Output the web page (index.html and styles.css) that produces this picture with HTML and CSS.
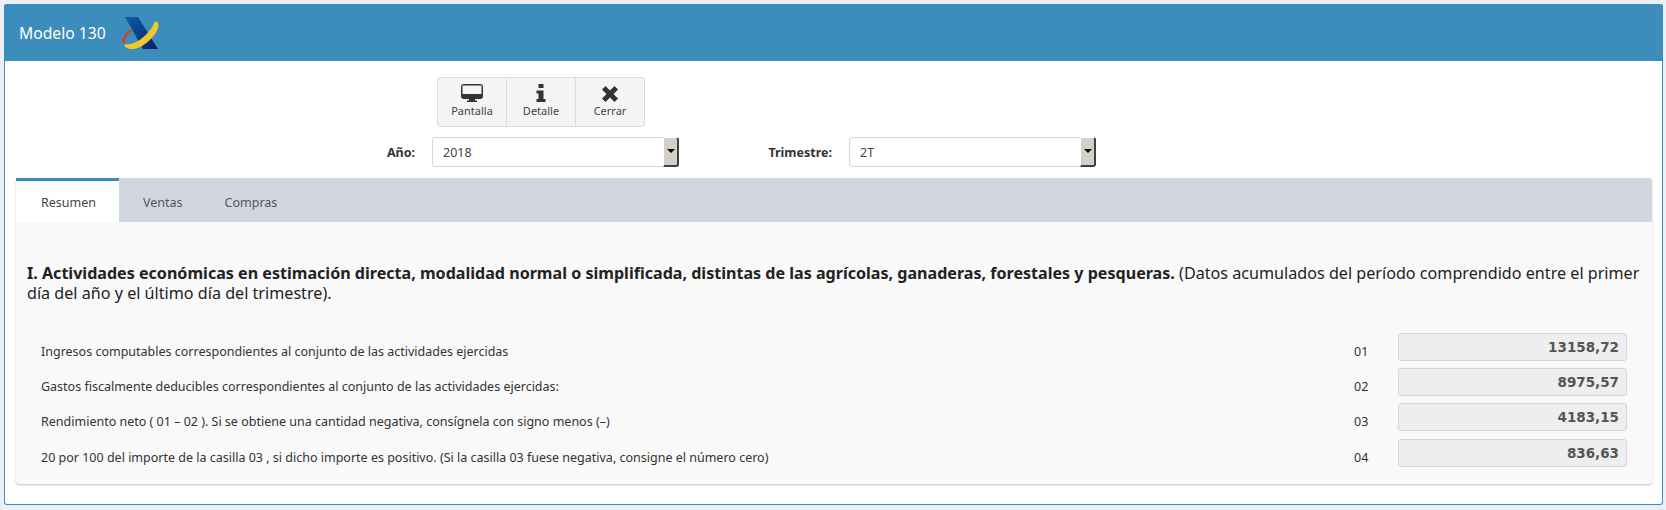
FILE: index.html
```html
<!DOCTYPE html>
<html lang="es">
<head>
<meta charset="utf-8">
<title>Modelo 130</title>
<link rel="stylesheet" href="styles.css">
</head>
<body>
<div class="panel">
  <header class="panel-head">
    <span class="panel-title">Modelo 130</span>
    <svg class="logo" width="38" height="34" viewBox="0 0 38 34">
      <defs>
        <linearGradient id="xg" x1="0" y1="0" x2="1" y2="1">
          <stop offset="0" stop-color="#0a5ea8"/>
          <stop offset="1" stop-color="#0a1f66"/>
        </linearGradient>
      </defs>
      <path d="M4 1H17L37 33H22Z" fill="url(#xg)"/>
      <path d="M9.500 13.500C5 16 1.500 21 1 26L3.500 28C4 23 6.500 18 10.500 15.500Z" fill="#d8401f"/>
      <path d="M34 5.500C31 13 24 21 17 25C13 27.500 8 28.500 4.500 28L3.500 30C5 32.500 9 33.500 13 33C21 32 34 22 37.500 11L37 6Z" fill="#f2c72e"/>
    </svg>
  </header>
  <div class="panel-body">
    <div class="toolbar">
      <button class="tool" type="button">
        <svg width="22" height="18" viewBox="0 0 22 18"><path d="M3 0H19A3 3 0 0 1 22 3V12A3 3 0 0 1 19 15H14V16.500H16V18H6V16.500H8V15H3A3 3 0 0 1 0 12V3A3 3 0 0 1 3 0ZM1.500 1.500V10H20.500V1.500Z" fill="#333" fill-rule="evenodd"/></svg>
        <span>Pantalla</span>
      </button>
      <button class="tool" type="button">
        <svg width="10" height="18" viewBox="0 0 10 18"><path d="M2.500 0H7.500V4H2.500ZM0.500 6.500H7.500V15H9.500V18H0.500V15H2.500V9.500H0.500Z" fill="#333"/></svg>
        <span>Detalle</span>
      </button>
      <button class="tool" type="button">
        <svg width="16" height="18" viewBox="0 0 16 18"><path d="M3.500 2L8 6.500L12.500 2L16 5.500L11.500 10L16 14.500L12.500 18L8 13.500L3.500 18L0 14.500L4.500 10L0 5.500Z" fill="#333"/></svg>
        <span>Cerrar</span>
      </button>
    </div>
    <div class="filters">
      <label class="filter-label first">Año:</label>
      <div class="select"><span class="select-value">2018</span><span class="select-arrow"></span></div>
      <label class="filter-label second">Trimestre:</label>
      <div class="select"><span class="select-value">2T</span><span class="select-arrow"></span></div>
    </div>
    <section class="tabs">
      <nav class="tab-bar">
        <a class="tab active">Resumen</a>
        <a class="tab">Ventas</a>
        <a class="tab">Compras</a>
      </nav>
      <div class="tab-content">
        <p class="intro"><strong>I. Actividades económicas en estimación directa, modalidad normal o simplificada, distintas de las agrícolas, ganaderas, forestales y pesqueras.</strong> (Datos acumulados del período comprendido entre el primer<br>día del año y el último día del trimestre).</p>
        <div class="rows">
          <div class="row"><span class="row-label">Ingresos computables correspondientes al conjunto de las actividades ejercidas</span><span class="row-code">01</span><span class="row-value">13158,72</span></div>
          <div class="row"><span class="row-label">Gastos fiscalmente deducibles correspondientes al conjunto de las actividades ejercidas:</span><span class="row-code">02</span><span class="row-value">8975,57</span></div>
          <div class="row"><span class="row-label">Rendimiento neto ( 01 – 02 ). Si se obtiene una cantidad negativa, consígnela con signo menos (–)</span><span class="row-code">03</span><span class="row-value">4183,15</span></div>
          <div class="row"><span class="row-label">20 por 100 del importe de la casilla 03 , si dicho importe es positivo. (Si la casilla 03 fuese negativa, consigne el número cero)</span><span class="row-code">04</span><span class="row-value">836,63</span></div>
        </div>
      </div>
    </section>
  </div>
</div>
</body>
</html>
```
FILE: styles.css
```css
* { box-sizing: border-box; }
html, body { margin: 0; height: 510px; overflow: hidden; }
body {
  background: #e9f0f6;
  padding: 4px 3px 5px 4px;
  font-family: "Noto Sans", sans-serif;
  color: #333;
}
.panel {
  height: 501px;
  background: #fff;
  border: 1px solid #3c8dbc;
  border-top: 0;
  border-radius: 3px;
  display: flex;
  flex-direction: column;
}
.panel-head {
  height: 57px;
  margin: 0 -1px;
  background: #3c8cbc;
  border-radius: 3px 3px 0 0;
  display: flex;
  align-items: center;
  padding-left: 15px;
  flex: none;
}
.panel-title { color: #fff; font-size: 15.700px; width: 102px; }
.logo { display: block; }
.panel-body { padding: 0 10px 0 11px; flex: 1; }
.toolbar {
  display: flex;
  margin: 16px 0 0 421px;
  width: 208px;
  height: 50px;
  border: 1px solid #dcdcdc;
  border-radius: 3px;
  background: #f4f4f4;
}
.tool {
  flex: 1;
  padding: 6px 0 0;
  border: 0;
  border-right: 1px solid #dcdcdc;
  background: transparent;
  color: #444;
  font-family: inherit;
  font-size: 11px;
  display: flex;
  flex-direction: column;
  align-items: center;
  gap: 2px;
}
.tool:last-child { border-right: 0; }
.tool span { line-height: 14px; }
.filters {
  display: flex;
  align-items: center;
  height: 30px;
  margin-top: 10px;
}
.filter-label { font-size: 12.500px; font-weight: 700; color: #333; text-align: right; }
.filter-label.first { width: 399px; margin-right: 17px; }
.filter-label.second { width: 153px; margin-right: 17px; }
.select {
  width: 247px;
  height: 30px;
  background: #fff;
  border: 1px solid #d2d6de;
  border-radius: 3px;
  display: flex;
  align-items: center;
  justify-content: space-between;
  font-size: 12.500px;
  color: #444;
}
.select-value { padding-left: 10px; }
.select-arrow {
  width: 16px;
  height: 30px;
  margin-right: -1px;
  background: #d4d0c8;
  border: 1px solid #fff;
  border-right: 2px solid #404040;
  border-bottom: 2px solid #404040;
  border-radius: 0 3px 3px 0;
  position: relative;
}
.select-arrow::after {
  content: "";
  position: absolute;
  left: 3px;
  top: 11px;
  border-left: 4px solid transparent;
  border-right: 4px solid transparent;
  border-top: 4px solid #000;
}
.tabs {
  margin-top: 11px;
  height: 306px;
  background: #f9f9f9;
  border-radius: 3px;
  box-shadow: 0 1px 2px rgba(0, 0, 0, .25);
}
.tab-bar {
  height: 44px;
  background: #d2d6e0;
  display: flex;
  border-radius: 3px 3px 0 0;
}
.tab {
  height: 44px;
  padding: 3px 21px 0;
  font-size: 12.500px;
  color: #555;
  line-height: 44px;
}
.tab.active {
  width: 103px;
  padding: 0 0 0 25px;
  background: #fff;
  color: #444;
  border-top: 3px solid #3c8dbc;
}
.tab.active + .tab { padding-left: 24px; }
.tab-content { padding: 41px 10px 0 11px; }
.intro {
  margin: 0;
  font-size: 16.150px;
  line-height: 20px;
  color: #222;
}
.intro strong { color: #222; font-size: 16.080px; }
.rows { margin-top: 30px; }
.row {
  display: flex;
  align-items: center;
  height: 28px;
  margin-bottom: 7px;
  padding-left: 14px;
  font-size: 12.500px;
  color: #333;
}
.row:nth-child(3) { margin-bottom: 8px; }
.row-label { flex: 1; padding-top: 8px; }
.row-code { width: 44px; padding-top: 8px; }
.row-value {
  width: 229px;
  margin-right: 15px;
  height: 28px;
  background: #eee;
  border: 1px solid #d2d6de;
  border-radius: 3px;
  text-align: right;
  padding-right: 7px;
  font-family: "DejaVu Sans", sans-serif;
  font-weight: 700;
  font-size: 13.500px;
  line-height: 26px;
  color: #555;
}
```
